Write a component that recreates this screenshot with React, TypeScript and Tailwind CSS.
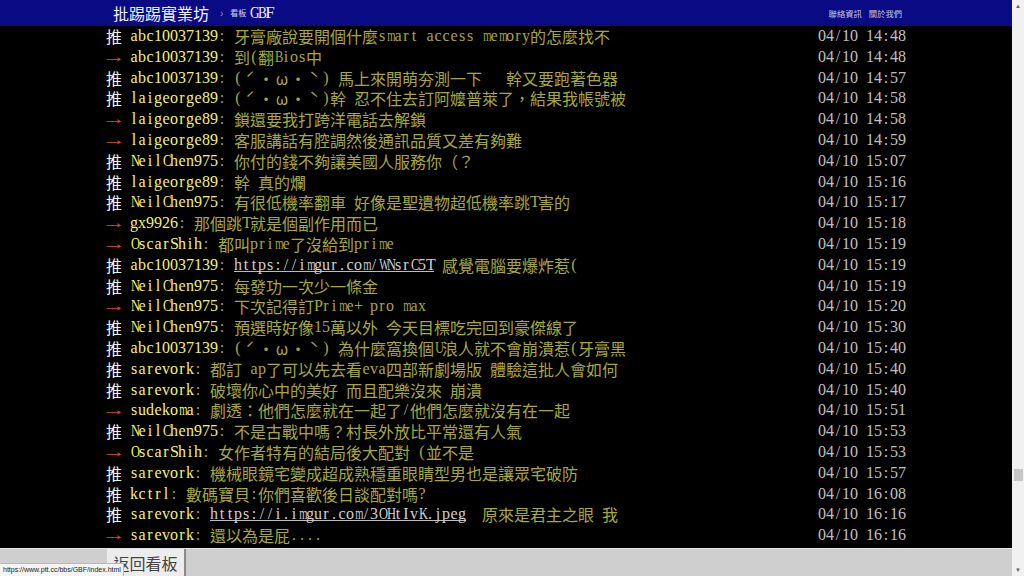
import React from "react";

type Part = string | { url: string };
type Push = { tag: "推" | "→"; user: string; content: Part[]; time: string };

const PUSHES: Push[] = [
  { tag: "推", user: "abc10037139", content: ["牙膏廠說要開個什麼smart access memory的怎麼找不"], time: "04/10 14:48" },
  { tag: "→", user: "abc10037139", content: ["到(翻Bios中"], time: "04/10 14:48" },
  { tag: "推", user: "abc10037139", content: ["(ˊ・ω・ˋ) 馬上來開萌夯測一下   幹又要跑著色器"], time: "04/10 14:57" },
  { tag: "推", user: "laigeorge89", content: ["(ˊ・ω・ˋ)幹 忍不住去訂阿嬤普萊了，結果我帳號被"], time: "04/10 14:58" },
  { tag: "→", user: "laigeorge89", content: ["鎖還要我打跨洋電話去解鎖"], time: "04/10 14:58" },
  { tag: "→", user: "laigeorge89", content: ["客服講話有腔調然後通訊品質又差有夠難"], time: "04/10 14:59" },
  { tag: "推", user: "NeilChen975", content: ["你付的錢不夠讓美國人服務你（？"], time: "04/10 15:07" },
  { tag: "推", user: "laigeorge89", content: ["幹 真的爛"], time: "04/10 15:16" },
  { tag: "推", user: "NeilChen975", content: ["有很低機率翻車 好像是聖遺物超低機率跳T害的"], time: "04/10 15:17" },
  { tag: "→", user: "gx9926", content: ["那個跳T就是個副作用而已"], time: "04/10 15:18" },
  { tag: "→", user: "OscarShih", content: ["都叫prime了沒給到prime"], time: "04/10 15:19" },
  { tag: "推", user: "abc10037139", content: [{ url: "https://imgur.com/WNsrC5T" }, " 感覺電腦要爆炸惹("], time: "04/10 15:19" },
  { tag: "推", user: "NeilChen975", content: ["每發功一次少一條金"], time: "04/10 15:19" },
  { tag: "→", user: "NeilChen975", content: ["下次記得訂Prime+ pro max"], time: "04/10 15:20" },
  { tag: "推", user: "NeilChen975", content: ["預選時好像15萬以外 今天目標吃完回到豪傑線了"], time: "04/10 15:30" },
  { tag: "推", user: "abc10037139", content: ["(ˊ・ω・ˋ) 為什麼窩換個U浪人就不會崩潰惹(牙膏黑"], time: "04/10 15:40" },
  { tag: "推", user: "sarevork", content: ["都訂 ap了可以先去看eva四部新劇場版 體驗這批人會如何"], time: "04/10 15:40" },
  { tag: "推", user: "sarevork", content: ["破壞你心中的美好 而且配樂沒來 崩潰"], time: "04/10 15:40" },
  { tag: "→", user: "sudekoma", content: ["劇透：他們怎麼就在一起了/他們怎麼就沒有在一起"], time: "04/10 15:51" },
  { tag: "推", user: "NeilChen975", content: ["不是古戰中嗎？村長外放比平常還有人氣"], time: "04/10 15:53" },
  { tag: "→", user: "OscarShih", content: ["女作者特有的結局後大配對 (並不是"], time: "04/10 15:53" },
  { tag: "推", user: "sarevork", content: ["機械眼鏡宅變成超成熟穩重眼睛型男也是讓眾宅破防"], time: "04/10 15:57" },
  { tag: "推", user: "kctrl", content: ["數碼寶貝:你們喜歡後日談配對嗎?"], time: "04/10 16:08" },
  { tag: "推", user: "sarevork", content: [{ url: "https://i.imgur.com/3OHtIvK.jpeg" }, "  原來是君主之眼 我"], time: "04/10 16:16" },
  { tag: "→", user: "sarevork", content: ["還以為是屁...."], time: "04/10 16:16" },
  { tag: "推", user: "sudekoma", content: ["結局大團圓也不錯啦"], time: "04/10 16:20" },
];

const SQUEEZE_HARD = "MWmw@";
const SQUEEZE = "ABCDEGHKNOQRUVXYZ";

// terminal cells: ascii is half width (8px), everything else full width (16px)
function Cells({ text, color }: { text: string; color: string }) {
  return (
    <>
      {Array.from(text).map((c, i) => {
        if (c === "→")
          return (
            <span key={i} className={`inline-block w-4 shrink-0 scale-x-[1.5] text-center font-['Liberation_Sans',sans-serif] ${color}`}>
              {c}
            </span>
          );
        if (c.charCodeAt(0) > 0x7f)
          return (
            <span key={i} className={`inline-block w-4 shrink-0 text-center font-['Noto_Sans_CJK_TC',sans-serif] ${color}`}>
              {c}
            </span>
          );
        const sq = SQUEEZE_HARD.includes(c) ? "scale-x-[0.66]" : SQUEEZE.includes(c) ? "scale-x-[0.78]" : "";
        return (
          <span key={i} className={`inline-block w-2 shrink-0 text-center font-['Liberation_Serif',serif] ${sq} ${color}`}>
            {c === " " ? "\u00a0" : c}
          </span>
        );
      })}
    </>
  );
}

function PushRow({ p }: { p: Push }) {
  return (
    <div className="flex h-[20.8px] shrink-0 items-start leading-[20.8px] text-[16px]">
      <Cells text={p.tag} color={p.tag === "推" ? "text-[#f4f4f4]" : "text-[#d84a4a]"} />
      <Cells text=" " color="" />
      <Cells text={p.user} color="text-[#f4f46c]" />
      <Cells text=": " color="text-[#a8a83a]" />
      {p.content.map((part, i) =>
        typeof part === "string" ? (
          <Cells key={i} text={part} color="text-[#a8a83a]" />
        ) : (
          <span key={i} className="flex h-[17px] shrink-0 border-b border-[#bdbdbd]">
            <Cells text={part.url} color="text-[#d0d0d0]" />
          </span>
        )
      )}
      <span className="ml-auto flex">
        <Cells text={p.time} color="text-[#c0c0c0]" />
      </span>
    </div>
  );
}

export default function App() {
  return (
    <div className="relative flex h-[576px] w-[1024px] overflow-hidden bg-black">
      <div className="flex w-[1012px] flex-col">
        {/* Top bar */}
        <div className="h-[26px] shrink-0 bg-[#0a0a84]">
          <div className="mx-auto flex h-full w-[800px] items-center">
            <span className="ml-[7px] font-['Noto_Sans_CJK_TC',sans-serif] text-[16px] leading-none text-[#f0f0f0]">
              批踢踢實業坊
            </span>
            <span className="ml-[11px] font-['Liberation_Sans',sans-serif] text-[10px] text-[#9a9ac8]">›</span>
            <span className="ml-[7px] font-['Noto_Sans_CJK_TC',sans-serif] text-[8px] text-[#d8d8e8]">看板</span>
            <span className="ml-[3px] flex leading-[20px] text-[17px]">
              <Cells text="GBF" color="text-[#f0f0f0]" />
            </span>
            <span className="ml-auto mr-[4px] flex gap-[7px] font-['Noto_Sans_CJK_TC',sans-serif] text-[8.3px] text-[#c4c4dc]">
              <span>聯絡資訊</span>
              <span>關於我們</span>
            </span>
          </div>
        </div>

        {/* Pushes */}
        <div className="flex-1 overflow-hidden">
          <div className="mx-auto flex w-[800px] flex-col">
            {PUSHES.map((p, i) => (
              <PushRow key={i} p={p} />
            ))}
          </div>
        </div>

        {/* Bottom navigation */}
        <div className="h-[28px] shrink-0 border-t border-[#e4e4e4] bg-[#cfcfcf]">
          <div className="mx-auto flex h-full w-[800px]">
            <div className="ml-[1px] flex h-full w-[79px] items-center justify-center border-r-2 border-[#8a8a8a] bg-[#ececec] font-['Noto_Sans_CJK_TC',sans-serif] text-[16px] text-[#444]">
              返回看板
            </div>
          </div>
        </div>
      </div>

      {/* Scrollbar */}
      <div className="flex w-[12px] flex-col bg-[#f1f1f1]">
        <div className="flex h-[12px] items-center justify-center text-[6px] leading-none text-[#606060]">▲</div>
        <div className="flex-1 pt-[457px]">
          <div className="ml-[2px] h-[12px] w-[9px] bg-[#c6c6c6]" />
        </div>
        <div className="flex h-[12px] items-center justify-center text-[6px] leading-none text-[#606060]">▼</div>
      </div>

      {/* Browser status bubble */}
      <div className="absolute bottom-0 left-0 h-[13px] w-[124px] border-t border-r border-[#b8b8b8] bg-[#f4f4f4] pl-[3px] font-['Liberation_Sans',sans-serif] text-[7px] leading-[12px] text-[#222]">
        https://www.ptt.cc/bbs/GBF/index.html
      </div>
    </div>
  );
}
